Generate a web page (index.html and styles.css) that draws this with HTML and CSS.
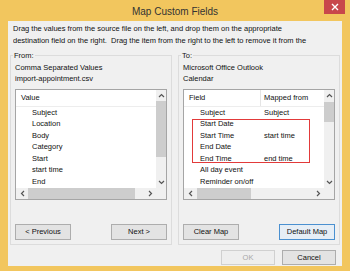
FILE: index.html
```html
<!DOCTYPE html>
<html lang="en">
<head>
    <meta charset="UTF-8">
    <title>Map Custom Fields</title>
    <link rel="stylesheet" href="styles.css">
</head>
<body>
<div class="window">
    <div class="titlebar">
        <span></span>
        <span class="title">Map Custom Fields</span>
        <span class="close"><svg width="8" height="8" viewBox="0 0 8 8"><path d="M1 1L7 7M7 1L1 7" stroke="#fff" stroke-width="1.4"/></svg></span>
    </div>
    <div class="client">
        <p class="intro">Drag the values from the source file on the left, and drop them on the appropriate<br>destination field on the right.&nbsp; Drag the item from the right to the left to remove it from the</p>
        <div class="groups">
            <!-- source -->
            <fieldset class="group">
                <legend>From:</legend>
                <div class="source">Comma Separated Values<br>import-appointment.csv</div>
                <div class="list">
                    <div class="list-main">
                        <div class="list-view">
                            <div class="list-head"><span class="col-value">Value</span></div>
                            <div class="row"><span class="col-value">Subject</span></div>
                            <div class="row"><span class="col-value">Location</span></div>
                            <div class="row"><span class="col-value">Body</span></div>
                            <div class="row"><span class="col-value">Category</span></div>
                            <div class="row"><span class="col-value">Start</span></div>
                            <div class="row"><span class="col-value">start time</span></div>
                            <div class="row"><span class="col-value">End</span></div>
                        </div>
                        <div class="vscroll">
                            <span class="arrow"><svg width="7" height="5" viewBox="0 0 7 5"><path d="M1 4L3.5 1.5L6 4" fill="none" stroke="#555" stroke-width="1.2"/></svg></span>
                            <span class="track"><span class="thumb" style="height:56px"></span></span>
                            <span class="arrow"><svg width="7" height="5" viewBox="0 0 7 5"><path d="M1 1L3.5 3.5L6 1" fill="none" stroke="#555" stroke-width="1.2"/></svg></span>
                        </div>
                    </div>
                    <div class="hscroll">
                        <span class="arrow"><svg width="5" height="7" viewBox="0 0 5 7"><path d="M4 1L1.5 3.5L4 6" fill="none" stroke="#555" stroke-width="1.2"/></svg></span>
                        <span class="track"><span class="thumb" style="width:107px"></span></span>
                        <span class="arrow"><svg width="5" height="7" viewBox="0 0 5 7"><path d="M1 1L3.5 3.5L1 6" fill="none" stroke="#555" stroke-width="1.2"/></svg></span>
                        <span class="corner"></span>
                    </div>
                </div>
                <div class="group-buttons">
                    <button class="btn">&lt; Previous</button>
                    <button class="btn">Next &gt;</button>
                </div>
            </fieldset>
            <!-- destination -->
            <fieldset class="group">
                <legend>To:</legend>
                <div class="source">Microsoft Office Outlook<br>Calendar</div>
                <div class="list">
                    <div class="list-main">
                        <div class="list-view">
                            <div class="list-head"><span class="col-field">Field</span><span class="col-map">Mapped from</span></div>
                            <div class="row"><span class="col-field">Subject</span><span class="col-map">Subject</span></div>
                            <div class="row"><span class="col-field">Start Date</span><span class="col-map"></span></div>
                            <div class="row"><span class="col-field">Start Time</span><span class="col-map">start time</span></div>
                            <div class="row"><span class="col-field">End Date</span><span class="col-map"></span></div>
                            <div class="row"><span class="col-field">End Time</span><span class="col-map">end time</span></div>
                            <div class="row"><span class="col-field">All day event</span><span class="col-map"></span></div>
                            <div class="row"><span class="col-field">Reminder on/off</span><span class="col-map"></span></div>
                            <div class="highlight"></div>
                        </div>
                        <div class="vscroll">
                            <span class="arrow"><svg width="7" height="5" viewBox="0 0 7 5"><path d="M1 4L3.5 1.5L6 4" fill="none" stroke="#555" stroke-width="1.2"/></svg></span>
                            <span class="track"><span class="thumb" style="height:20px;margin-top:1px"></span></span>
                            <span class="arrow"><svg width="7" height="5" viewBox="0 0 7 5"><path d="M1 1L3.5 3.5L6 1" fill="none" stroke="#555" stroke-width="1.2"/></svg></span>
                        </div>
                    </div>
                    <div class="hscroll">
                        <span class="arrow"><svg width="5" height="7" viewBox="0 0 5 7"><path d="M4 1L1.5 3.5L4 6" fill="none" stroke="#555" stroke-width="1.2"/></svg></span>
                        <span class="track"><span class="thumb" style="width:54px;margin-left:1px"></span></span>
                        <span class="arrow"><svg width="5" height="7" viewBox="0 0 5 7"><path d="M1 1L3.5 3.5L1 6" fill="none" stroke="#555" stroke-width="1.2"/></svg></span>
                        <span class="corner"></span>
                    </div>
                </div>
                <div class="group-buttons">
                    <button class="btn">Clear Map</button>
                    <button class="btn btn-default">Default Map</button>
                </div>
            </fieldset>
        </div>
        <div class="footer">
            <button class="btn btn-small" disabled>OK</button>
            <button class="btn btn-small">Cancel</button>
        </div>
    </div>
</div>
</body>
</html>
```
FILE: styles.css
```css
body{
    margin: 0;
    font-family: "Liberation Sans", Arial, sans-serif;
    font-size: 7.5px;
    color: #111;
}
.window{
    width: 350px;
    height: 271px;
    background: #f2c65e;
    display: flex;
    flex-direction: column;
}
.titlebar{
    height: 21px;
    display: grid;
    grid-template-columns: 1fr auto 1fr;
    align-items: center;
}
.title{
    font-size: 10px;
    color: #333;
    padding-top: 1px;
}
.close{
    justify-self: end;
    align-self: start;
    width: 21px;
    height: 14px;
    margin-right: 5px;
    background: #c8474b;
    display: flex;
    align-items: center;
    justify-content: center;
}
.client{
    flex: 1;
    margin: 0 8px 5px 8px;
    background: #f0f0f0;
    padding: 2px 2px 0;
    box-sizing: border-box;
}
.intro{
    margin: 0 0 0 3px;
    width: 322px;
    line-height: 11.5px;
    height: 23px;
    overflow: hidden;
}
.groups{
    margin-top: 4px;
    display: grid;
    grid-template-columns: 1fr 1fr;
    gap: 6px;
}
.group{
    margin: 0;
    min-width: 0;
    border: 1px solid #dcdcdc;
    padding: 0 4px 4px;
}
.group legend{
    padding: 0 1px;
    margin-left: -2px;
    line-height: 11.5px;
}
.source{
    line-height: 11.5px;
    white-space: nowrap;
}
.list{
    margin-top: 4px;
    height: 111px;
    box-sizing: border-box;
    border: 1px solid #a5a5a5;
    background: #fff;
    display: flex;
    flex-direction: column;
}
.list-main{
    flex: 1;
    display: flex;
    min-height: 0;
}
.list-view{
    flex: 1;
    overflow: hidden;
    position: relative;
}
.list-head{
    height: 17px;
    box-sizing: border-box;
    border-bottom: 1px solid #ededed;
    display: flex;
    align-items: center;
}
.list-head .col-value{
    padding-left: 5px;
}
.list-head .col-field{
    padding-left: 5px;
}
.list-head .col-map{
    padding-left: 3px;
    border-left: 1px solid #e5e5e5;
    height: 16px;
    line-height: 16px;
}
.row{
    height: 11.5px;
    line-height: 11.5px;
    display: flex;
    white-space: nowrap;
}
.row .col-value{
    padding-left: 16px;
}
.row .col-field{
    padding-left: 16px;
}
.col-field{
    width: 76px;
    box-sizing: border-box;
    flex: none;
}
.row .col-map{
    padding-left: 4px;
}
.highlight{
    position: absolute;
    left: 8px;
    top: 29px;
    width: 118px;
    height: 44px;
    box-sizing: border-box;
    border: 1.5px solid #e23a3a;
}
.vscroll{
    width: 10px;
    background: #f0f0f0;
    display: flex;
    flex-direction: column;
}
.vscroll .arrow{
    height: 11px;
    display: flex;
    align-items: center;
    justify-content: center;
}
.vscroll .track{
    flex: 1;
    display: flex;
    flex-direction: column;
}
.vscroll .thumb{
    background: #cdcdcd;
}
.hscroll{
    height: 11px;
    background: #f0f0f0;
    display: flex;
}
.hscroll .arrow{
    width: 12px;
    display: flex;
    align-items: center;
    justify-content: center;
}
.hscroll .track{
    flex: 1;
    display: flex;
}
.hscroll .thumb{
    background: #cdcdcd;
}
.hscroll .corner{
    width: 10px;
}
svg{
    display: block;
}
.group-buttons{
    margin-top: 24px;
    display: flex;
    justify-content: space-between;
}
.btn{
    width: 56px;
    height: 16px;
    padding: 0;
    font: inherit;
    color: #111;
    background: #e3e3e3;
    border: 1px solid #adadad;
}
.btn-default{
    border-color: #4a90d0;
    background: #e6eef6;
}
.footer{
    margin-top: 5px;
    padding-right: 4px;
    display: flex;
    justify-content: flex-end;
    gap: 7px;
}
.btn-small{
    width: 54px;
    height: 15px;
}
.btn:disabled{
    color: #a8a8a8;
    background: #eeeeee;
    border-color: #d0d0d0;
}
```
